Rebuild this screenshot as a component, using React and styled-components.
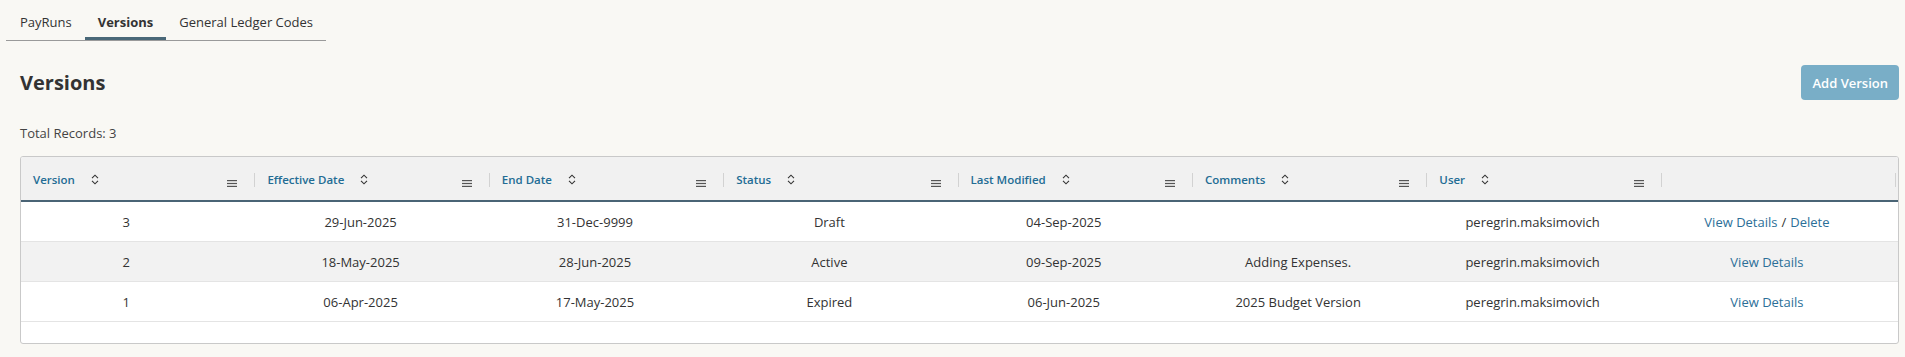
import React from "react";
import styled, { createGlobalStyle } from "styled-components";

const GlobalStyle = createGlobalStyle`
  body {
    margin: 0;
    background: #f9f8f4;
    font-family: "Open Sans", "Liberation Sans", sans-serif;
    color: #333;
  }
`;

const columns = [
  "Version",
  "Effective Date",
  "End Date",
  "Status",
  "Last Modified",
  "Comments",
  "User",
  "",
];

const rows = [
  {
    version: 3,
    effective: "29-Jun-2025",
    end: "31-Dec-9999",
    status: "Draft",
    modified: "04-Sep-2025",
    comments: "",
    user: "peregrin.maksimovich",
    canDelete: true,
  },
  {
    version: 2,
    effective: "18-May-2025",
    end: "28-Jun-2025",
    status: "Active",
    modified: "09-Sep-2025",
    comments: "Adding Expenses.",
    user: "peregrin.maksimovich",
  },
  {
    version: 1,
    effective: "06-Apr-2025",
    end: "17-May-2025",
    status: "Expired",
    modified: "06-Jun-2025",
    comments: "2025 Budget Version",
    user: "peregrin.maksimovich",
  },
];

// chevrons up/down
const SortIcon = () => (
  <svg width="8" height="11" viewBox="0 0 8 11" fill="none">
    <polyline points="1,4.2 4,1.2 7,4.2" stroke="#333" strokeWidth="1.1" />
    <polyline points="1,6.8 4,9.8 7,6.8" stroke="#333" strokeWidth="1.1" />
  </svg>
);

const MenuIcon = () => (
  <svg width="10" height="7" viewBox="0 0 10 7">
    <rect x="0" y="0" width="10" height="1.2" fill="#555" />
    <rect x="0" y="2.9" width="10" height="1.2" fill="#555" />
    <rect x="0" y="5.8" width="10" height="1.2" fill="#555" />
  </svg>
);

const App = () => {
  const tabs = ["PayRuns", "Versions", "General Ledger Codes"];
  return (
    <>
      <GlobalStyle />
      <Page>
        <TabBar>
          {tabs.map((t) => (
            <Tab key={t} $active={t === "Versions"}>
              {t}
            </Tab>
          ))}
        </TabBar>

        <Content>
          <TitleRow>
            <Title>Versions</Title>
            <AddButton>Add Version</AddButton>
          </TitleRow>

          <Total>Total Records: 3</Total>

          <Grid>
            <HeaderRow>
              {columns.map((c, i) => (
                <HeaderCell key={i}>
                  {c && (
                    <>
                      <HeaderLabel>{c}</HeaderLabel>
                      <SortWrap>
                        <SortIcon />
                      </SortWrap>
                      <MenuWrap>
                        <MenuIcon />
                      </MenuWrap>
                    </>
                  )}
                </HeaderCell>
              ))}
            </HeaderRow>
            <Body>
              {rows.map((r, i) => (
                <Row key={r.version} $odd={i % 2 === 1}>
                  <Cell>{r.version}</Cell>
                  <Cell>{r.effective}</Cell>
                  <Cell>{r.end}</Cell>
                  <Cell>{r.status}</Cell>
                  <Cell>{r.modified}</Cell>
                  <Cell>{r.comments}</Cell>
                  <Cell>{r.user}</Cell>
                  <Cell>
                    <LinkText>View Details</LinkText>
                    {r.canDelete && (
                      <>
                        <Slash>/</Slash>
                        <LinkText>Delete</LinkText>
                      </>
                    )}
                  </Cell>
                </Row>
              ))}
            </Body>
          </Grid>
        </Content>
      </Page>
    </>
  );
};

export default App;

const Page = styled.div`
  padding: 0 6px 13px 6px;
`;

const TabBar = styled.div`
  display: inline-flex;
  padding-left: 1px;
  border-bottom: 1px solid #9a9a9a;
  height: 40px;
`;

const Tab = styled.div`
  box-sizing: border-box;
  height: 40px;
  padding: 7px 13px 0;
  display: flex;
  align-items: center;
  font-size: 13px;
  font-weight: ${(p) => (p.$active ? 700 : 400)};
  color: #333;
  border-bottom: 3px solid ${(p) => (p.$active ? "#4a6878" : "transparent")};
  cursor: pointer;
`;

const Content = styled.div`
  padding-left: 14px;
`;

const TitleRow = styled.div`
  display: flex;
  align-items: center;
  justify-content: space-between;
  margin-top: 24px;
  height: 35px;
`;

const Title = styled.h2`
  margin: 0;
  font-size: 20px;
  font-weight: 700;
  color: #333;
`;

const AddButton = styled.button`
  height: 35px;
  padding: 0 11px;
  border: none;
  border-radius: 4px;
  background: #79aec7;
  color: #fff;
  font-family: "Open Sans", "Liberation Sans", sans-serif;
  font-size: 13px;
  font-weight: 600;
  cursor: pointer;
`;

const Total = styled.div`
  margin-top: 24px;
  font-size: 13px;
  line-height: 18px;
  color: #444;
`;

const Grid = styled.div`
  margin-top: 14px;
  border: 1px solid #c9c9c9;
  border-radius: 3px;
  background: #fff;
  overflow: hidden;
`;

const HeaderRow = styled.div`
  display: grid;
  grid-template-columns: repeat(8, 234.4px) 1fr;
  height: 43px;
  background: #f1f1f1;
  border-bottom: 2px solid #4a6475;
`;

const HeaderCell = styled.div`
  position: relative;
  display: flex;
  align-items: center;
  padding: 2px 0 0 12px;

  &::after {
    content: "";
    position: absolute;
    right: 0;
    top: 16px;
    height: 14px;
    width: 1px;
    background: #d2d2d2;
  }
`;

const HeaderLabel = styled.span`
  font-size: 11.5px;
  font-weight: 600;
  color: #236c94;
  white-space: nowrap;
`;

const SortWrap = styled.span`
  display: flex;
  margin-left: 16px;
`;

const MenuWrap = styled.span`
  display: flex;
  margin-left: auto;
  margin-right: 18px;
  margin-top: 8px;
`;

const Body = styled.div`
  min-height: 141px;
`;

const Row = styled.div`
  display: grid;
  grid-template-columns: repeat(8, 234.4px) 1fr;
  height: 40px;
  box-sizing: border-box;
  background: ${(p) => (p.$odd ? "#f2f2f2" : "#fff")};
  border-bottom: 1px solid #e4e4e4;
`;

const Cell = styled.div`
  display: flex;
  align-items: center;
  justify-content: center;
  padding-right: 24px;
  font-size: 13px;
  color: #333;
  white-space: nowrap;
`;

const LinkText = styled.span`
  color: #2b6f98;
  cursor: pointer;
`;

const Slash = styled.span`
  margin: 0 4px;
  color: #333;
`;
